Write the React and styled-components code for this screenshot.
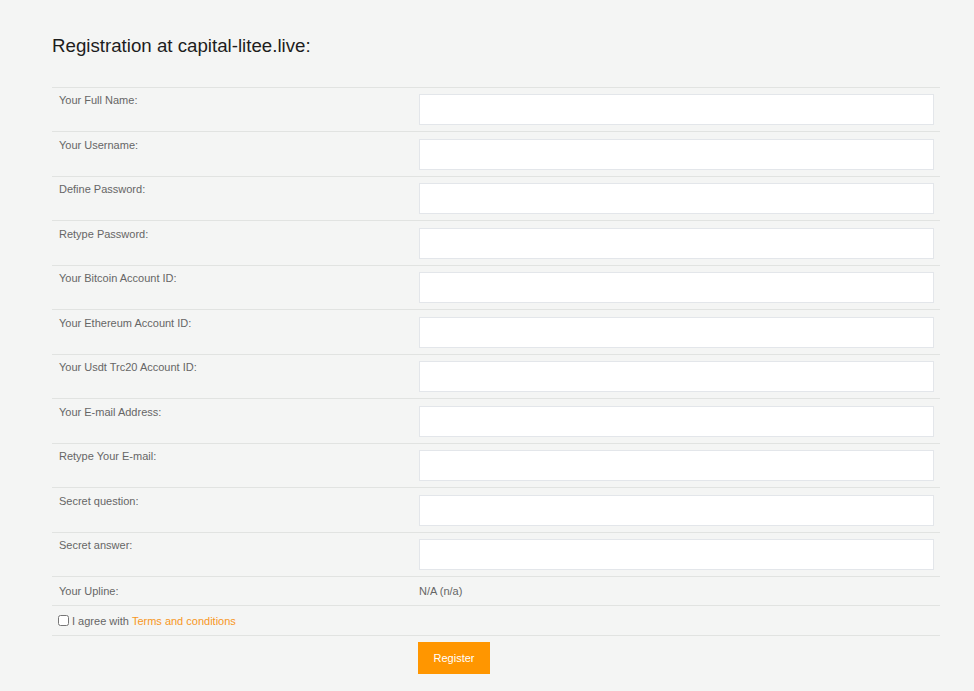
import styled, { createGlobalStyle } from "styled-components";

const GlobalStyle = createGlobalStyle`
    body {
        margin : 0;
        background-color : #f4f5f4;
        font-family : "Liberation Sans", Arial, sans-serif;
    }
`;

const Page = styled.div`
    padding : 34px 34px 18px 52px;
`;

const Title = styled.h3`
    margin : 0 0 28.5px;
    font-size : 18.7px;
    font-weight : 400;
    color : #1d1d1d;
    line-height : 24px;
`;

const Table = styled.div`
    display : grid;
    grid-template-columns : 361px 1fr;
`;

const Row = styled.div`
    display : contents;
`;

const Cell = styled.div`
    border-top : 1px solid #e1e3e1;
    padding : ${(p) => (p.$compact ? "7px 6px" : "6.5px 6px")};
    height : ${(p) => p.$h}px;
    box-sizing : border-box;
    font-size : 11px;
    line-height : 14px;
    color : #666;
    display : flex;
    align-items : ${(p) => (p.$compact ? "center" : "flex-start")};
    padding-left : ${(p) => (p.$first ? "7px" : "6px")};
`;

const Label = styled.span`
    margin-top : -1px;
`;

const Input = styled.input`
    width : 100%;
    height : 31px;
    box-sizing : border-box;
    border : 1px solid #e3e6ea;
    background-color : white;
    &:focus {
        outline : none;
    }
`;

const Agree = styled.label`
    grid-column : 1 / 3;
    border-top : 1px solid #e1e3e1;
    height : 30px;
    box-sizing : border-box;
    display : flex;
    align-items : center;
    padding-left : 6px;
    font-size : 11px;
    color : #666;
    input {
        margin : 0 3px 0 0;
        width : 11px;
        height : 11px;
    }
`;

const Link = styled.a`
    color : #f7971e;
    text-decoration : none;
    margin-left : 3px;
`;

const Footer = styled.div`
    grid-column : 2;
    border-top : 1px solid #e1e3e1;
    padding : 6px 5px;
`;

const FooterLeft = styled.div`
    border-top : 1px solid #e1e3e1;
`;

const Button = styled.button`
    width : 72px;
    height : 32px;
    border : none;
    background-color : #ff9600;
    color : white;
    font-family : inherit;
    font-size : 11px;
`;

const fields = [
    "Your Full Name:",
    "Your Username:",
    "Define Password:",
    "Retype Password:",
    "Your Bitcoin Account ID:",
    "Your Ethereum Account ID:",
    "Your Usdt Trc20 Account ID:",
    "Your E-mail Address:",
    "Retype Your E-mail:",
    "Secret question:",
    "Secret answer:",
];

const App = () => {
    return (
        <Page>
            <GlobalStyle />
            <Title>Registration at capital-litee.live:</Title>
            <Table>
                {fields.map((f) => (
                    <Row key={f}>
                        <Cell $first $h={44.5}>
                            <Label>{f}</Label>
                        </Cell>
                        <Cell $h={44.5}>
                            <Input type={f.includes("Password") ? "password" : "text"} />
                        </Cell>
                    </Row>
                ))}
                <Row>
                    <Cell $first $compact $h={29}>Your Upline:</Cell>
                    <Cell $compact $h={29}>N/A (n/a)</Cell>
                </Row>
                <Agree>
                    <input type="checkbox" />I agree with<Link href="#">Terms and conditions</Link>
                </Agree>
                <FooterLeft />
                <Footer>
                    <Button>Register</Button>
                </Footer>
            </Table>
        </Page>
    );
};

export default App;
